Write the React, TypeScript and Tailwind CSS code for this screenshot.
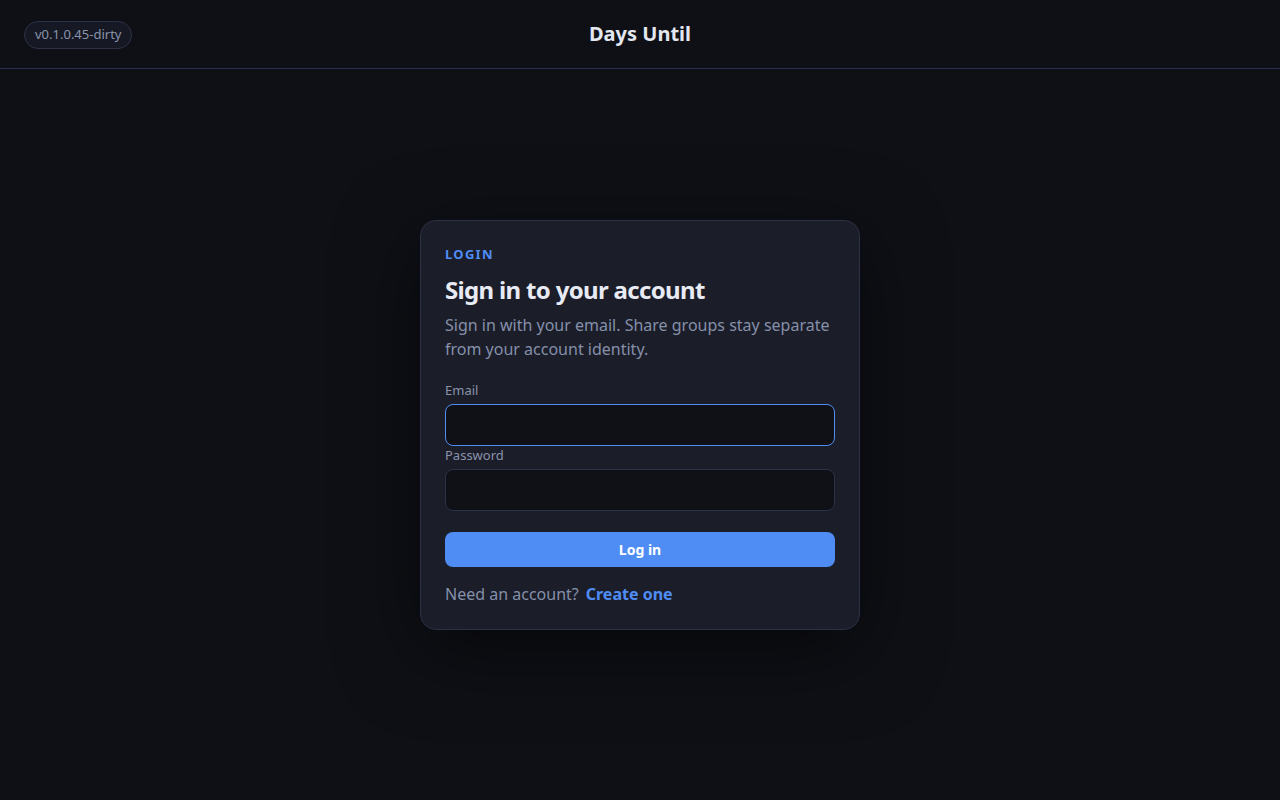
export default function App() {
  return (
    <div
      className="min-h-screen bg-[#0f1016] text-[#e6e9f2]"
      style={{ fontFamily: '"Noto Sans", "Open Sans", sans-serif' }}
    >
      <header className="relative flex h-[69px] items-center justify-center border-b border-[#2a2d52]">
        <span className="absolute left-6 top-[21px] flex h-[28px] items-center rounded-full border border-[#2c3146] bg-[#161923] px-[10px] text-[13px] text-[#8a93ab]">
          v0.1.0.45-dirty
        </span>
        <h1 className="text-[20px] font-bold text-[#e3e7f0]">Days Until</h1>
      </header>

      <main className="flex justify-center pt-[151px]">
        <div className="w-[440px] rounded-[16px] border border-[#2c3145] bg-[#1b1d29] px-6 pb-[23px] pt-[23px] shadow-[0_20px_80px_rgba(0,0,0,0.55)]">
          <p className="text-[13px] font-bold leading-[20px] tracking-[0.1em] text-[#4f8df5]">LOGIN</p>
          <h2 className="mt-[10px] text-[24px] font-bold leading-[32px] tracking-[-0.028em] text-[#e8ebf3]">
            Sign in to your account
          </h2>
          <p className="mt-[7px] text-[16px] leading-[24px] text-[#8590aa]">
            Sign in with your email. Share groups stay separate from your account identity.
          </p>

          <form className="mt-[20px] flex flex-col">
            <label className="text-[13px] leading-[18px] text-[#8a93ab]">Email</label>
            <input
              type="email"
              className="mt-[5px] h-[42px] rounded-[8px] border border-[#4f8df5] bg-[#101117] px-3 text-[15px] text-[#e6e9f2] outline-none"
            />
            <label className="text-[13px] leading-[18px] text-[#8a93ab]">Password</label>
            <input
              type="password"
              className="mt-[5px] h-[42px] rounded-[8px] border border-[#2c3145] bg-[#101117] px-3 text-[15px] text-[#e6e9f2] outline-none"
            />
            <button
              type="button"
              className="mt-[21px] h-[35px] rounded-[8px] bg-[#4f8df5] text-[14px] font-bold text-white"
            >
              Log in
            </button>
          </form>

          <p className="mt-[15px] flex items-center gap-[7px] text-[16px] leading-[24px] text-[#8590aa]">
            Need an account?
            <a className="font-bold text-[#4f8df5]">Create one</a>
          </p>
        </div>
      </main>
    </div>
  );
}
